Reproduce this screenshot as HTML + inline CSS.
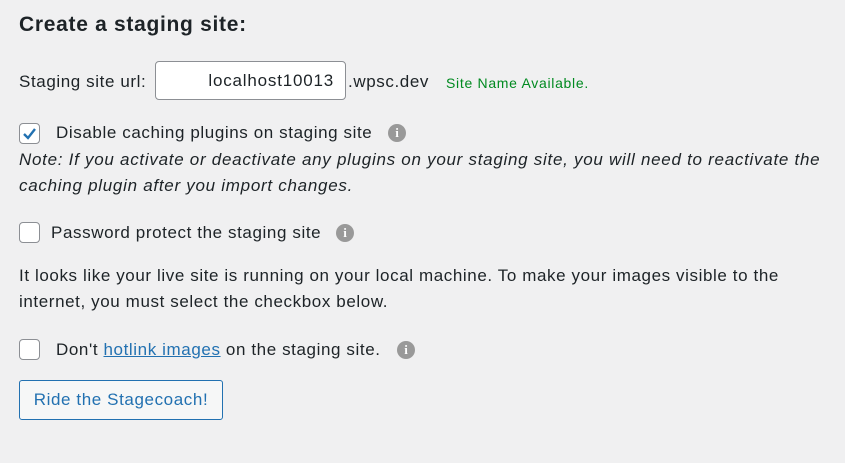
<!DOCTYPE html>
<html><head><style>
body{margin:0;background:#f0f0f1;font-family:"Liberation Sans",Arial,sans-serif;color:#1d2327;font-size:17px;letter-spacing:0.6px;width:845px;height:463px;overflow:hidden;position:relative}
.a{position:absolute;white-space:nowrap;line-height:20px}
h1{position:absolute;left:19px;top:11px;margin:0;font-size:21px;letter-spacing:0.7px;font-weight:bold;line-height:28px}
.inp{position:absolute;left:155px;top:61px;width:191px;height:39px;background:#fff;border:1px solid #8c8f94;border-radius:4px;box-sizing:border-box;text-align:right;padding-right:11px;line-height:37px;font-size:17px;letter-spacing:0.8px}
.cb{position:absolute;left:19px;width:21px;height:21px;box-sizing:border-box;border:1px solid #8c8f94;border-radius:4px;background:#fff}
.i{position:absolute;width:18px;height:18px;border-radius:50%;background:#999;color:#fff;font-weight:bold;font-size:13px;text-align:center;line-height:18px;font-family:"Liberation Serif",serif;letter-spacing:0}
.btn{position:absolute;left:19px;top:380px;width:204px;height:40px;box-sizing:border-box;border:1px solid #2271b1;border-radius:3px;background:#f6f7f7;color:#2271b1;text-align:center;line-height:38px;font-size:17px}
</style></head><body>
<h1>Create a staging site:</h1>
<div class="a" style="left:19px;top:72px">Staging site url:</div>
<div class="inp">localhost10013</div>
<div class="a" style="left:348px;top:72px">.wpsc.dev</div>
<div class="a" style="left:446px;top:73px;font-size:14px;letter-spacing:0.7px;color:#008a20">Site Name Available.</div>
<div class="cb" style="top:123px"><svg width="19" height="19" viewBox="0 0 19 19"><path d="M4 10l4 4 7-9" fill="none" stroke="#2271b1" stroke-width="2.4"/></svg></div>
<div class="a" style="left:56px;top:123px">Disable caching plugins on staging site</div>
<div class="i" style="left:388px;top:124px">i</div>
<div class="a" style="left:19px;top:150px;font-style:italic;letter-spacing:0.72px">Note: If you activate or deactivate any plugins on your staging site, you will need to reactivate the</div>
<div class="a" style="left:19px;top:176px;font-style:italic;letter-spacing:0.72px">caching plugin after you import changes.</div>
<div class="cb" style="top:222px"></div>
<div class="a" style="left:51px;top:223px">Password protect the staging site</div>
<div class="i" style="left:336px;top:224px">i</div>
<div class="a" style="left:19px;top:266px">It looks like your live site is running on your local machine. To make your images visible to the</div>
<div class="a" style="left:19px;top:292px">internet, you must select the checkbox below.</div>
<div class="cb" style="top:339px"></div>
<div class="a" style="left:56px;top:340px">Don't <span style="color:#2271b1;text-decoration:underline">hotlink images</span> on the staging site.</div>
<div class="i" style="left:397px;top:341px">i</div>
<div class="btn">Ride the Stagecoach!</div>
</body></html>
